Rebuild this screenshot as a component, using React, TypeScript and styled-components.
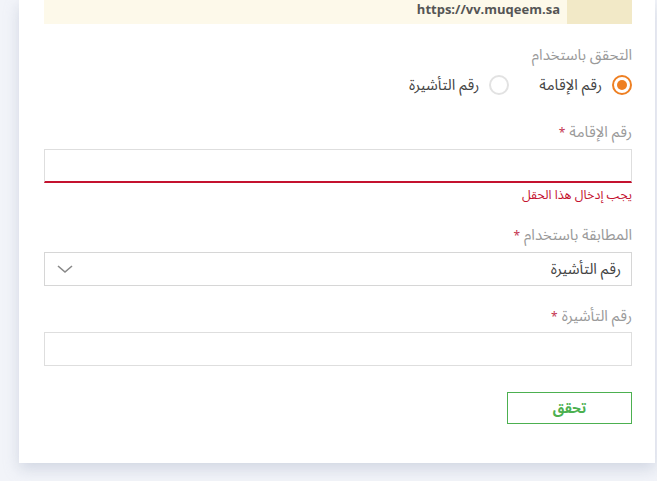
import React from "react";
import styled, { createGlobalStyle } from "styled-components";

const Global = createGlobalStyle`
  html, body { margin: 0; padding: 0; background: #f2f4f9; }
  body { font-family: "Noto Sans Arabic", "Noto Sans", "DejaVu Sans", sans-serif; }
  * { box-sizing: border-box; }
`;

const Page = styled.div`
  width: 657px;
  height: 481px;
  padding-left: 19px;
  background: #f2f4f9;
  overflow: hidden;
`;

const Card = styled.div`
  width: 636px;
  background: #fff;
  padding: 0 23px 39px 25px;
  box-shadow: 0 6px 14px rgba(150, 160, 185, 0.35);
  direction: rtl;
`;

const Banner = styled.div`
  display: flex;
  height: 24px;
  background: #fdf9ea;
`;

const BannerTab = styled.div`
  width: 65px;
  background: #f2e9c7;
`;

const BannerLink = styled.div`
  direction: ltr;
  font-family: "Open Sans", "Liberation Sans", sans-serif;
  font-weight: 700;
  font-size: 13px;
  line-height: 18px;
  color: #555;
  padding-right: 7px;
`;

const Label = styled.div<{ $mt: number }>`
  margin-top: ${(p) => p.$mt}px;
  height: 20px;
  line-height: 20px;
  font-size: 15px;
  color: #9a9a9a;
`;

const Star = styled.span`
  color: #c4344f;
  font-size: 12px;
  margin-right: 4px;
`;

const RadioRow = styled.div`
  margin-top: 9px;
  display: flex;
  align-items: center;
  gap: 30px;
  height: 22px;
`;

const Option = styled.label`
  display: flex;
  align-items: center;
  gap: 10px;
  font-size: 15px;
  color: #444;
`;

const Circle = styled.span<{ $on?: boolean }>`
  width: 20px;
  height: 20px;
  border-radius: 50%;
  border: 2px solid ${(p) => (p.$on ? "#ee7f22" : "#e2e2e2")};
  display: flex;
  align-items: center;
  justify-content: center;
  &::after {
    content: "";
    width: 10px;
    height: 10px;
    border-radius: 50%;
    background: ${(p) => (p.$on ? "#ee7f22" : "transparent")};
  }
`;

const Input = styled.div<{ $error?: boolean; $mt: number }>`
  margin-top: ${(p) => p.$mt}px;
  height: 34px;
  border: 1px solid #dedede;
  border-bottom: ${(p) => (p.$error ? "2px solid #c4122f" : "1px solid #dedede")};
  background: #fff;
`;

const ErrorText = styled.div`
  margin-top: 4px;
  font-size: 12.5px;
  line-height: 16px;
  color: #c4122f;
`;

const Select = styled.div`
  margin-top: 7px;
  height: 34px;
  border: 1px solid #d6d6d6;
  display: flex;
  align-items: center;
  justify-content: space-between;
  padding: 0 10px 0 12px;
  font-size: 15px;
  color: #444;
`;

const Button = styled.button`
  margin-top: 26px;
  width: 125px;
  height: 32px;
  border: 1px solid #4cb050;
  background: #fff;
  color: #4cb050;
  font-family: inherit;
  font-weight: 700;
  font-size: 14px;
  display: block;
`;

export default function App() {
  return (
    <Page>
      <Global />
      <Card>
        <Banner>
          <BannerTab />
          <BannerLink>https://vv.muqeem.sa</BannerLink>
        </Banner>

        <Label $mt={21}>التحقق باستخدام</Label>
        <RadioRow>
          <Option>
            <Circle $on />
            رقم الإقامة
          </Option>
          <Option>
            <Circle />
            رقم التأشيرة
          </Option>
        </RadioRow>

        <Label $mt={26}>
          رقم الإقامة<Star>*</Star>
        </Label>
        <Input $mt={7} $error />
        <ErrorText>يجب إدخال هذا الحقل</ErrorText>

        <Label $mt={22}>
          المطابقة باستخدام<Star>*</Star>
        </Label>
        <Select>
          <span>رقم التأشيرة</span>
          <svg width="16" height="10" viewBox="0 0 16 10">
            <polyline points="1,2 8,8 15,2" fill="none" stroke="#888" strokeWidth="1.6" />
          </svg>
        </Select>

        <Label $mt={20}>
          رقم التأشيرة<Star>*</Star>
        </Label>
        <Input $mt={6} />

        <Button>تحقق</Button>
      </Card>
    </Page>
  );
}
